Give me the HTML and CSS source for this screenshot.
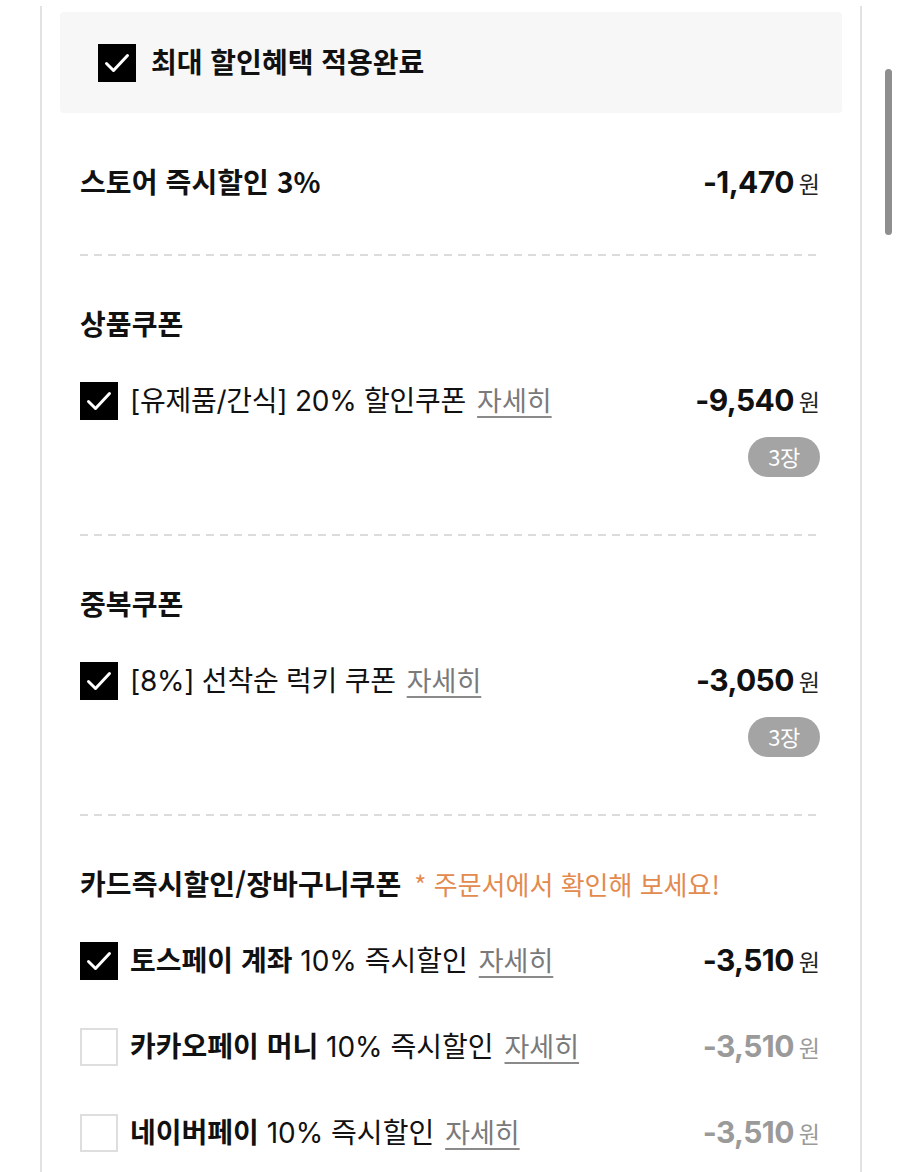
FILE: index.html
```html
<!DOCTYPE html>
<html lang="ko">
<head>
<meta charset="utf-8">
<title>할인혜택</title>
<link rel="stylesheet" href="styles.css">
</head>
<body>
<div class="frame">
  <div class="header">
    <span class="check checked">
      <svg viewBox="0 0 38 38" width="38" height="38"><polyline points="8.5,19.5 15.5,26.5 29.5,11.5" fill="none" stroke="#fff" stroke-width="3" stroke-linecap="round" stroke-linejoin="round"/></svg>
    </span>
    <span class="header-text">최대 할인혜택 적용완료</span>
  </div>

  <div class="content">
    <div class="section first">
      <div class="row">
        <span class="title">스토어 즉시할인 3%</span>
        <span class="amount"><b>-1,470</b><span class="won">원</span></span>
      </div>
    </div>
    <div class="divider"></div>

    <div class="section">
      <div class="title-row"><span class="title">상품쿠폰</span></div>
      <div class="row">
        <span class="item-left">
          <span class="check checked">
            <svg viewBox="0 0 38 38" width="38" height="38"><polyline points="8.5,19.5 15.5,26.5 29.5,11.5" fill="none" stroke="#fff" stroke-width="3" stroke-linecap="round" stroke-linejoin="round"/></svg>
          </span>
          <span class="label">[유제품/간식] 20% 할인쿠폰</span>
          <span class="more">자세히</span>
        </span>
        <span class="amount"><b>-9,540</b><span class="won">원</span></span>
      </div>
      <div class="badge-row"><span class="badge">3장</span></div>
    </div>
    <div class="divider"></div>

    <div class="section">
      <div class="title-row"><span class="title">중복쿠폰</span></div>
      <div class="row">
        <span class="item-left">
          <span class="check checked">
            <svg viewBox="0 0 38 38" width="38" height="38"><polyline points="8.5,19.5 15.5,26.5 29.5,11.5" fill="none" stroke="#fff" stroke-width="3" stroke-linecap="round" stroke-linejoin="round"/></svg>
          </span>
          <span class="label">[8%] 선착순 럭키 쿠폰</span>
          <span class="more">자세히</span>
        </span>
        <span class="amount"><b>-3,050</b><span class="won">원</span></span>
      </div>
      <div class="badge-row"><span class="badge">3장</span></div>
    </div>
    <div class="divider"></div>

    <div class="section">
      <div class="title-row">
        <span class="title">카드즉시할인/장바구니쿠폰</span>
        <span class="note">* 주문서에서 확인해 보세요!</span>
      </div>
      <div class="row">
        <span class="item-left">
          <span class="check checked">
            <svg viewBox="0 0 38 38" width="38" height="38"><polyline points="8.5,19.5 15.5,26.5 29.5,11.5" fill="none" stroke="#fff" stroke-width="3" stroke-linecap="round" stroke-linejoin="round"/></svg>
          </span>
          <span class="label pay-label"><strong>토스페이 계좌</strong> 10% 즉시할인</span>
          <span class="more">자세히</span>
        </span>
        <span class="amount"><b>-3,510</b><span class="won">원</span></span>
      </div>
      <div class="row pay">
        <span class="item-left">
          <span class="check"></span>
          <span class="label pay-label"><strong>카카오페이 머니</strong> 10% 즉시할인</span>
          <span class="more">자세히</span>
        </span>
        <span class="amount off"><b>-3,510</b><span class="won">원</span></span>
      </div>
      <div class="row pay">
        <span class="item-left">
          <span class="check"></span>
          <span class="label pay-label"><strong>네이버페이</strong> 10% 즉시할인</span>
          <span class="more">자세히</span>
        </span>
        <span class="amount off"><b>-3,510</b><span class="won">원</span></span>
      </div>
    </div>
  </div>
</div>
<div class="scrollbar"></div>
</body>
</html>
```

FILE: styles.css
```css
html, body {
  margin: 0;
  padding: 0;
  background: #fff;
  overflow: hidden;
}

body {
  font-family: Inter, "Noto Sans CJK KR", sans-serif;
  color: #111;
}

.frame {
  box-sizing: border-box;
  margin: 6px 0 0 40px;
  width: 822px;
  height: 1166px;
  border-left: 2px solid #e2e2e2;
  border-right: 2px solid #e2e2e2;
  padding: 6px 18px 0;
}

.header {
  height: 101px;
  background: #f7f7f7;
  border-radius: 4px;
  display: flex;
  align-items: center;
  padding-left: 38px;
  gap: 15px;
}

.header-text {
  font-family: "Noto Sans CJK KR", sans-serif;
  font-weight: 700;
  font-size: 28px;
  color: #111;
  padding-bottom: 4px;
}

.check {
  box-sizing: border-box;
  width: 38px;
  height: 38px;
  flex: none;
  border: 2px solid #dedede;
  background: #fff;
  display: flex;
}

.check.checked {
  border: none;
  background: #000;
}

.content {
  padding: 0 22px 0 20px;
}

.section {
  padding: 49px 0 57px;
}

.section.first {
  padding: 50px 0 51px;
}

.divider {
  height: 2px;
  background: repeating-linear-gradient(to right, #dcdcdc 0 8px, transparent 8px 14px);
}

.row {
  display: flex;
  align-items: center;
  height: 40px;
}

.row.pay {
  margin-top: 46px;
}

.title-row {
  display: flex;
  align-items: center;
  height: 40px;
  margin-bottom: 36px;
  gap: 13px;
}

.title {
  font-family: "Noto Sans CJK KR", sans-serif;
  font-weight: 700;
  font-size: 28px;
  letter-spacing: 0.1px;
  color: #111;
  padding-bottom: 4px;
}

.note {
  font-family: "Noto Sans CJK KR", sans-serif;
  font-size: 26px;
  color: #e38a4f;
  padding-bottom: 4px;
}

.item-left {
  display: flex;
  align-items: center;
}

.label {
  margin-left: 12px;
  font-size: 28px;
  letter-spacing: -0.25px;
  color: #111;
  white-space: nowrap;
  padding-bottom: 4px;
}

.label.pay-label {
  letter-spacing: 0;
}

.label strong {
  font-family: "Noto Sans CJK KR", sans-serif;
  font-weight: 700;
  letter-spacing: 0;
}

.more {
  margin-left: 11px;
  font-family: "Noto Sans CJK KR", sans-serif;
  font-size: 27px;
  color: #7a7a7a;
  text-decoration: underline;
  text-decoration-thickness: 2px;
  text-underline-offset: 5px;
  text-decoration-color: #8a8a8a;
  padding-bottom: 4px;
}

.amount {
  margin-left: auto;
  display: flex;
  align-items: baseline;
  color: #111;
  padding-bottom: 2px;
}

.amount b {
  font-family: Inter, sans-serif;
  font-weight: 700;
  font-size: 30px;
  letter-spacing: -0.6px;
}

.won {
  margin-left: 5px;
  font-family: "Noto Sans CJK KR", sans-serif;
  font-size: 23px;
  color: #222;
}

.amount.off,
.amount.off .won {
  color: #9a9a9a;
}

.badge-row {
  display: flex;
  justify-content: flex-end;
  margin-top: 16px;
}

.badge {
  width: 72px;
  height: 40px;
  border-radius: 20px;
  background: #a4a4a4;
  color: #fff;
  font-family: "Noto Sans CJK KR", sans-serif;
  font-size: 22px;
  display: flex;
  align-items: center;
  justify-content: center;
  letter-spacing: -0.5px;
  box-sizing: border-box;
  padding-bottom: 3px;
}

.scrollbar {
  position: absolute;
  left: 885px;
  top: 69px;
  width: 7px;
  height: 166px;
  border-radius: 4px;
  background: #8f8f8f;
}
```
